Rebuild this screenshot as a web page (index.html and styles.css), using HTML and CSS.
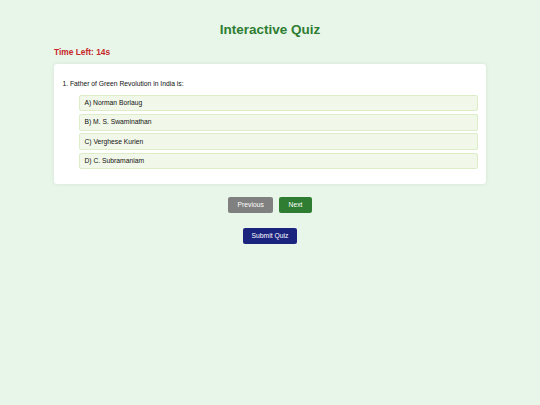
FILE: index.html
```html
<!DOCTYPE html>
<html lang="en">
<head>
<meta charset="utf-8">
<title>Interactive Quiz</title>
<link rel="stylesheet" href="styles.css">
</head>
<body>
<div class="container">
  <h1 class="title">Interactive Quiz</h1>
  <div class="timer">Time Left: 14s</div>
  <div class="card">
    <p class="question">1. Father of Green Revolution in India is:</p>
    <ul class="options">
      <li class="option">A) Norman Borlaug</li>
      <li class="option">B) M. S. Swaminathan</li>
      <li class="option">C) Verghese Kurien</li>
      <li class="option">D) C. Subramaniam</li>
    </ul>
  </div>
  <div class="nav">
    <button class="btn btn-prev">Previous</button>
    <button class="btn btn-next">Next</button>
  </div>
  <div class="submit-row">
    <button class="btn btn-submit">Submit Quiz</button>
  </div>
</div>
</body>
</html>
```

FILE: styles.css
```css
html, body {
  margin: 0;
  padding: 0;
  background: #e8f5e9;
}
body {
  font-family: "Liberation Sans", Arial, sans-serif;
  font-size: 6.75px;
  line-height: 7.8px;
  color: #111;
  padding: 3.4px;
}
.container {
  width: 432px;
  margin: 0 auto;
  padding: 8.4px 0;
}
.title {
  font-size: 13.5px;
  line-height: 15.5px;
  font-weight: bold;
  color: #2e7d32;
  text-align: center;
  margin: 10px 0 10.5px;
}
.timer {
  font-size: 8.4px;
  line-height: 9.3px;
  font-weight: bold;
  color: #c62828;
  margin-bottom: 7.3px;
}
.card {
  background: #fff;
  border-radius: 3.4px;
  padding: 8.4px;
  box-shadow: 0 0 4px rgba(0, 0, 0, 0.08);
}
.question {
  margin: 7.3px 0 6.75px;
}
.options {
  list-style: none;
  margin: 6.75px 0;
  padding: 0 0 0 16.9px;
}
.option {
  background: #f1f8e9;
  border: 1px solid #dcedc8;
  border-radius: 2.1px;
  padding: 3.4px 4.2px;
  margin-bottom: 2.8px;
}
.option:last-child {
  margin-bottom: 0;
}
.nav {
  display: flex;
  justify-content: center;
  gap: 6.6px;
  margin-top: 12.4px;
}
.submit-row {
  display: flex;
  justify-content: center;
  margin-top: 14.7px;
}
.btn {
  font-family: "Liberation Sans", Arial, sans-serif;
  font-size: 6.75px;
  line-height: 7.8px;
  color: #fff;
  border: none;
  border-radius: 2.1px;
  padding: 4.2px 9.1px;
  cursor: pointer;
}
.btn-prev { background: #808080; }
.btn-next { background: #2e7d32; }
.btn-submit { background: #1a237e; }
```
